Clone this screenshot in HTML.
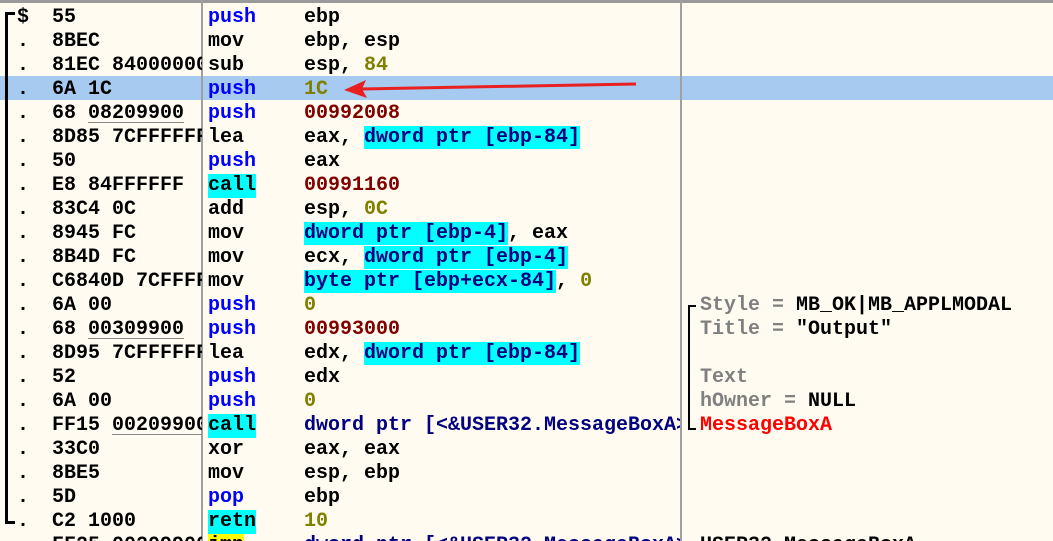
<!DOCTYPE html>
<html style="overflow:hidden"><head><style>
html,body{overflow:hidden}
body{margin:0;width:1053px;height:541px;overflow:hidden;background:#fffbf0;position:relative;font-family:"Liberation Mono",monospace;font-weight:bold;font-size:20px;}
.r{position:absolute;left:0;width:1053px;height:24px;line-height:24px;white-space:pre;}
.r span{position:absolute;top:2px;}
.d{left:17px}
.b{left:52px;width:150px;overflow:hidden}
.m{left:208px}
.o{left:304px}
.c{left:700px}
.hl{background:#a6caf0}
.bl{color:#0000ff}
.nv{color:#000080}
.rd{color:#800000}
.ol{color:#808000}
.cy{background:#00ffff}
.ye{background:#ffff00}
.gr{color:#808080}
.u{text-decoration:underline;text-decoration-thickness:1px;text-underline-offset:4px;text-decoration-color:#888}
.vl{position:absolute;top:0;width:2px;height:541px;background:#a0a0a0}
</style></head><body>
<div style="position:absolute;left:0;top:0;width:1053px;height:3px;background:#9a9a9a"></div>
<div class="r hl" style="top:76px"></div>
<div class="vl" style="left:201px"></div>
<div class="vl" style="left:680px"></div>
<div style="position:absolute;left:5px;top:12px;width:3px;height:512px;background:#000"></div>
<div style="position:absolute;left:5px;top:12px;width:10px;height:3px;background:#000"></div>
<div style="position:absolute;left:5px;top:521px;width:10px;height:3px;background:#000"></div>
<div style="position:absolute;left:688px;top:305px;width:2px;height:125px;background:#000"></div>
<div style="position:absolute;left:688px;top:305px;width:8px;height:2px;background:#000"></div>
<div style="position:absolute;left:688px;top:428px;width:8px;height:2px;background:#000"></div>

<div class="r" style="top:4px"><span class="d">$</span><span class="b">55</span><span class="m bl">push</span><span class="o">ebp</span></div>
<div class="r" style="top:28px"><span class="d">.</span><span class="b">8BEC</span><span class="m">mov</span><span class="o">ebp, esp</span></div>
<div class="r" style="top:52px"><span class="d">.</span><span class="b">81EC 84000000</span><span class="m">sub</span><span class="o">esp, <b class="ol">84</b></span></div>
<div class="r" style="top:76px"><span class="d">.</span><span class="b">6A 1C</span><span class="m bl">push</span><span class="o ol">1C</span></div>
<div class="r" style="top:100px"><span class="d">.</span><span class="b">68 <u class="u">08209900</u></span><span class="m bl">push</span><span class="o rd">00992008</span></div>
<div class="r" style="top:124px"><span class="d">.</span><span class="b">8D85 7CFFFFFF</span><span class="m">lea</span><span class="o">eax, <b class="nv cy">dword ptr [ebp-84]</b></span></div>
<div class="r" style="top:148px"><span class="d">.</span><span class="b">50</span><span class="m bl">push</span><span class="o">eax</span></div>
<div class="r" style="top:172px"><span class="d">.</span><span class="b">E8 84FFFFFF</span><span class="m cy">call</span><span class="o rd">00991160</span></div>
<div class="r" style="top:196px"><span class="d">.</span><span class="b">83C4 0C</span><span class="m">add</span><span class="o">esp, <b class="ol">0C</b></span></div>
<div class="r" style="top:220px"><span class="d">.</span><span class="b">8945 FC</span><span class="m">mov</span><span class="o"><b class="nv cy">dword ptr [ebp-4]</b>, eax</span></div>
<div class="r" style="top:244px"><span class="d">.</span><span class="b">8B4D FC</span><span class="m">mov</span><span class="o">ecx, <b class="nv cy">dword ptr [ebp-4]</b></span></div>
<div class="r" style="top:268px"><span class="d">.</span><span class="b">C6840D 7CFFFFFF</span><span class="m">mov</span><span class="o"><b class="nv cy">byte ptr [ebp+ecx-84]</b>, <b class="ol">0</b></span></div>
<div class="r" style="top:292px"><span class="d">.</span><span class="b">6A 00</span><span class="m bl">push</span><span class="o ol">0</span><span class="c"><b class="gr">Style = </b>MB_OK|MB_APPLMODAL</span></div>
<div class="r" style="top:316px"><span class="d">.</span><span class="b">68 <u class="u">00309900</u></span><span class="m bl">push</span><span class="o rd">00993000</span><span class="c"><b class="gr">Title = </b>"Output"</span></div>
<div class="r" style="top:340px"><span class="d">.</span><span class="b">8D95 7CFFFFFF</span><span class="m">lea</span><span class="o">edx, <b class="nv cy">dword ptr [ebp-84]</b></span></div>
<div class="r" style="top:364px"><span class="d">.</span><span class="b">52</span><span class="m bl">push</span><span class="o">edx</span><span class="c gr">Text</span></div>
<div class="r" style="top:388px"><span class="d">.</span><span class="b">6A 00</span><span class="m bl">push</span><span class="o ol">0</span><span class="c"><b class="gr">hOwner = </b>NULL</span></div>
<div class="r" style="top:412px"><span class="d">.</span><span class="b">FF15 <u class="u">00209900</u></span><span class="m cy">call</span><span class="o nv" style="width:376px;overflow:hidden">dword ptr [&lt;&amp;USER32.MessageBoxA&gt;]</span><span class="c" style="color:#ff0000">MessageBoxA</span></div>
<div class="r" style="top:436px"><span class="d">.</span><span class="b">33C0</span><span class="m">xor</span><span class="o">eax, eax</span></div>
<div class="r" style="top:460px"><span class="d">.</span><span class="b">8BE5</span><span class="m">mov</span><span class="o">esp, ebp</span></div>
<div class="r" style="top:484px"><span class="d">.</span><span class="b">5D</span><span class="m bl">pop</span><span class="o">ebp</span></div>
<div class="r" style="top:508px"><span class="d">.</span><span class="b">C2 1000</span><span class="m cy">retn</span><span class="o ol">10</span></div>
<div class="r" style="top:532px"><span class="b">FF25 00209900</span><span class="m ye">jmp</span><span class="o nv" style="width:376px;overflow:hidden">dword ptr [&lt;&amp;USER32.MessageBoxA&gt;]</span><span class="c">USER32.MessageBoxA</span></div>

<svg style="position:absolute;left:0;top:0" width="1053" height="541">
<path d="M636,84 L360,89" stroke="#e82020" stroke-width="3" fill="none"/>
<path d="M344,90 L366,80 L362,89 L367,98 Z" fill="#e82020"/>
</svg>
</body></html>
